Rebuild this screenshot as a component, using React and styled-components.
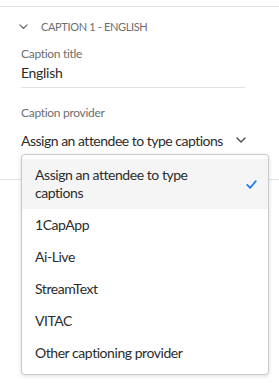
import React from "react";
import styled, { createGlobalStyle } from "styled-components";

const GlobalStyle = createGlobalStyle`
  body {
    margin: 0;
    background: #ffffff;
    font-family: "Lato", "Noto Sans", sans-serif;
    color: #2c2c2c;
  }
`;

const providers = [
  "Assign an attendee to type captions",
  "1CapApp",
  "Ai-Live",
  "StreamText",
  "VITAC",
  "Other captioning provider",
];

function Chevron({ size = 9, color = "#6e6e6e" }) {
  return (
    <svg width={size} height={size * 0.6} viewBox="0 0 10 6" fill="none">
      <path d="M1 1l4 4 4-4" stroke={color} strokeWidth="1.4" strokeLinecap="round" strokeLinejoin="round" />
    </svg>
  );
}

function Check() {
  return (
    <svg width="11" height="9" viewBox="0 0 11 9" fill="none">
      <path d="M1.2 4.8l3 3L9.8 1.2" stroke="#2680eb" strokeWidth="1.8" strokeLinecap="round" strokeLinejoin="round" />
    </svg>
  );
}

function App() {
  return (
    <>
      <GlobalStyle />
      <Page>
        <Section>
          <SectionHeader>
            <Chevron />
            <SectionTitle>CAPTION 1 - ENGLISH</SectionTitle>
          </SectionHeader>
          <Fields>
            <Label>Caption title</Label>
            <TextField>English</TextField>
            <Label $spaced>Caption provider</Label>
            <Picker>
              <PickerValue>Assign an attendee to type captions</PickerValue>
              <Chevron size={10} color="#4b4b4b" />
            </Picker>
          </Fields>
          <Popover>
            {providers.map((p, i) => (
              <MenuItem key={p} $selected={i === 0}>
                <ItemText>{p}</ItemText>
                {i === 0 && <Check />}
              </MenuItem>
            ))}
          </Popover>
        </Section>
      </Page>
    </>
  );
}

const Page = styled.div`
  padding-top: 6px;
  width: 279px;
  min-height: 383px;
  box-sizing: border-box;
`;

const Section = styled.div`
  position: relative;
  border-top: 1px solid #e3e3e3;
  border-bottom: 1px solid #e3e3e3;
  padding-bottom: 23px;
`;

const SectionHeader = styled.div`
  display: flex;
  align-items: center;
  gap: 13px;
  height: 39px;
  padding-left: 19px;
`;

const SectionTitle = styled.span`
  font-size: 11px;
  color: #6e6e6e;
  letter-spacing: -0.35px;
`;

const Fields = styled.div`
  display: flex;
  flex-direction: column;
  padding-left: 21px;
  width: 224px;
`;

const Label = styled.div`
  font-size: 12px;
  line-height: 16px;
  color: #6e6e6e;
  letter-spacing: -0.3px;
  margin-top: ${(p) => (p.$spaced ? "17px" : "0")};
`;

const TextField = styled.div`
  font-size: 14px;
  line-height: 22px;
  height: 25px;
  border-bottom: 1px solid #e1e1e1;
  color: #2c2c2c;
  letter-spacing: -0.3px;
`;

const Picker = styled.div`
  display: flex;
  align-items: center;
  gap: 13px;
  height: 32px;
  margin-top: 3px;
  width: 260px;
`;

const PickerValue = styled.span`
  font-size: 14px;
  color: #2c2c2c;
  white-space: nowrap;
  letter-spacing: -0.5px;
`;

const Popover = styled.div`
  position: absolute;
  left: 21px;
  top: 147px;
  width: 246px;
  padding: 4px 0 5px;
  background: #ffffff;
  border: 1px solid #cacaca;
  border-radius: 4px;
  box-shadow: 0 1px 4px rgba(0, 0, 0, 0.15);
`;

const MenuItem = styled.div`
  display: flex;
  align-items: center;
  justify-content: space-between;
  gap: 12px;
  padding: 7px 11px 7px 13px;
  font-size: 14px;
  line-height: 18px;
  letter-spacing: -0.45px;
  color: #2c2c2c;
  background: ${(p) => (p.$selected ? "#f5f5f5" : "transparent")};
`;

const ItemText = styled.span`
  flex: 1;
  max-width: 190px;
`;

export default App;
